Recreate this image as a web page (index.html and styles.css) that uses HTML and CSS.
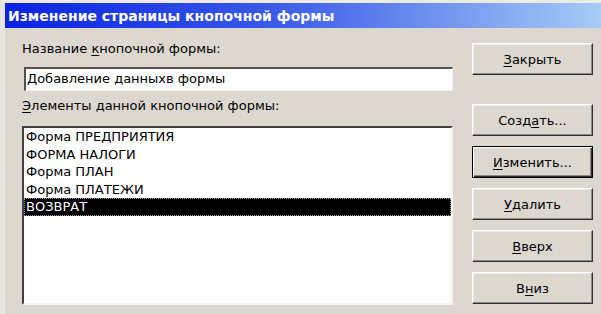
FILE: index.html
```html
<!DOCTYPE html>
<html lang="ru">
<head>
<meta charset="utf-8">
<title>Изменение страницы кнопочной формы</title>
<link rel="stylesheet" href="styles.css">
</head>
<body>
<div class="window">
  <div class="titlebar"><span class="title">Изменение страницы кнопочной формы</span></div>
  <div class="content">
    <div class="left">
      <div class="label">Название <u>к</u>нопочной формы:</div>
      <div class="input">Добавление данныхв формы</div>
      <div class="label label2"><u>Э</u>лементы данной кнопочной формы:</div>
      <div class="list">
        <div class="item">Форма ПРЕДПРИЯТИЯ</div>
        <div class="item">ФОРМА НАЛОГИ</div>
        <div class="item">Форма ПЛАН</div>
        <div class="item">Форма ПЛАТЕЖИ</div>
        <div class="item selected">ВОЗВРАТ</div>
      </div>
    </div>
    <div class="buttons">
      <div class="btn btn-close"><u>З</u>акрыть</div>
      <div class="btn">Созд<u>а</u>ть...</div>
      <div class="btn default"><u>И</u>зменить...</div>
      <div class="btn"><u>У</u>далить</div>
      <div class="btn"><u>В</u>верх</div>
      <div class="btn">В<u>н</u>из</div>
    </div>
  </div>
</div>
</body>
</html>
```
FILE: styles.css
```css
html, body {
  margin: 0;
  padding: 0;
  background: #dcd8d0;
}
.window {
  width: 601px;
  height: 314px;
  box-sizing: border-box;
  background: #dcd8d0;
  border-top: 3px solid #ecebe6;
  border-left: 5px solid #e6e4de;
  overflow: hidden;
  font-family: "DejaVu Sans", sans-serif;
  font-size: 13px;
  color: #000;
}
.titlebar {
  height: 25px;
  background: linear-gradient(to right, #0a22e4 0%, #3a5ae8 45%, #a6cbf6 100%);
  display: flex;
  align-items: center;
  padding-left: 3px;
}
.title {
  color: #fff;
  font-weight: bold;
  font-size: 14px;
}
.content {
  display: flex;
  padding-left: 17px;
}
.left {
  width: 431px;
  padding-top: 13px;
}
.label {
  line-height: 16px;
  height: 16px;
}
.label2 {
  margin-top: 7px;
}
.input {
  margin: 10px 0 0 2px;
  width: 429px;
  height: 24px;
  box-sizing: border-box;
  background: #fff;
  border-style: solid;
  border-width: 2px 1px 1px 2px;
  border-color: #505050 #f4f4f4 #f4f4f4 #505050;
  padding-left: 1px;
  line-height: 20px;
}
.list {
  margin-top: 12px;
  width: 431px;
  height: 179px;
  box-sizing: border-box;
  background: #fff;
  border-style: solid;
  border-width: 2px;
  border-color: #404040 #f4f4f4 #f4f4f4 #404040;
}
.item {
  height: 17.5px;
  line-height: 17.5px;
  padding-left: 2px;
  white-space: nowrap;
}
.item.selected {
  background: #000;
  color: #fff;
  outline: 1px dotted #9a9a9a;
  outline-offset: -1px;
}
.buttons {
  margin-left: 19px;
  padding-top: 15px;
  display: flex;
  flex-direction: column;
  gap: 10px;
  width: 121px;
}
.btn {
  height: 32px;
  box-sizing: border-box;
  display: flex;
  align-items: center;
  justify-content: center;
  background: #dcd8d0;
  border: 1px solid;
  border-color: #ffffff #303030 #303030 #ffffff;
  box-shadow: inset -1px -1px #8c8a86, inset 1px 1px #eeece8;
}
.btn-close {
  margin-bottom: 19px;
}
.btn.default {
  border: 1px solid #000;
  box-shadow: inset 1px 1px #ffffff, inset -1px -1px #303030, inset -2px -2px #8c8a86;
}
u {
  text-decoration: underline;
  text-underline-offset: 2px;
}
```
